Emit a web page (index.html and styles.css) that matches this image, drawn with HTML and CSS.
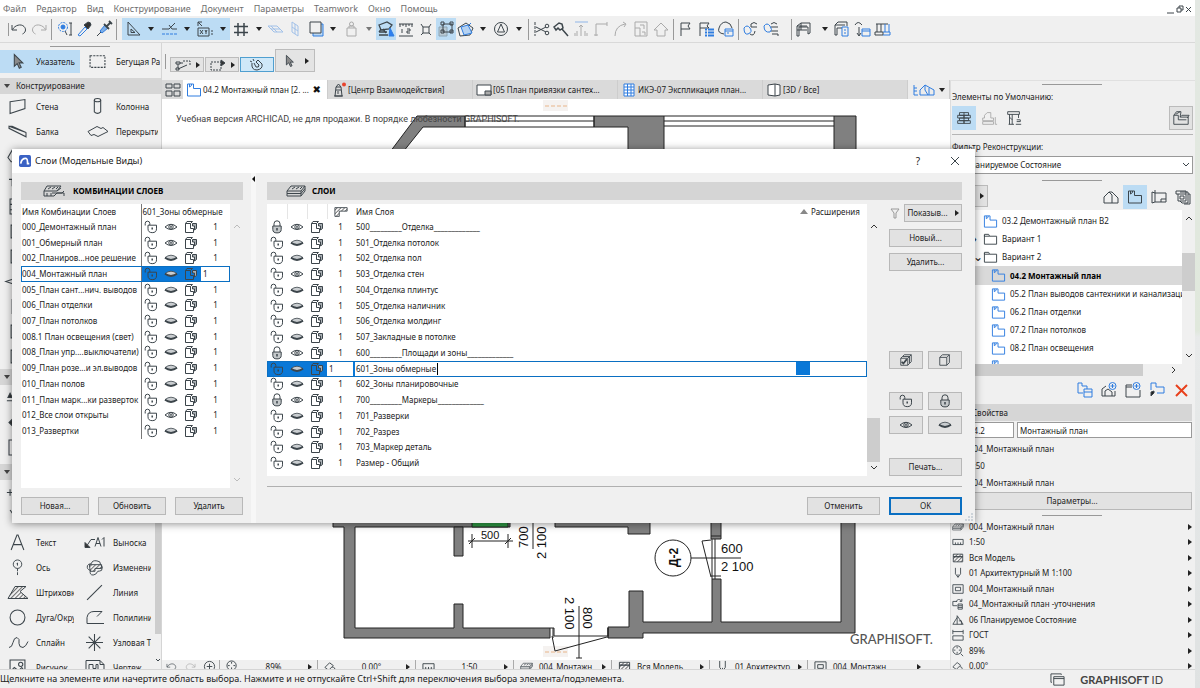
FILE: index.html
```html
<!DOCTYPE html>
<html lang="ru">
<head>
<meta charset="utf-8">
<title>Слои (Модельные Виды)</title>
<link rel="stylesheet" href="styles.css">
</head>
<body>
<svg class="defs" aria-hidden="true">
  <defs>
    <pattern id="hatch" width="3" height="3" patternUnits="userSpaceOnUse" patternTransform="rotate(45)"><path d="M0 0V3" stroke="#333" stroke-width="1.4"/></pattern>
  </defs>
  <symbol id="open" viewBox="0 0 14 14"><path d="M1.2 5.5V3.5a2.3 2.3 0 0 1 4.6 0V5M4 5.2h8.500v3.600a4.200 3.800 0 0 1-8.500 0z"/><path d="M8.200 7.500v2" stroke-width="1.500"/></symbol>
  <symbol id="lock" viewBox="0 0 14 14"><path d="M4 6V3.800a3 3 0 0 1 6 0V6"/><path d="M2.800 6h8.400v3.500a4.200 3.400 0 0 1-8.400 0z" fill="#c4c8ca"/><path d="M7 8v2.400" stroke-width="1.500"/></symbol>
  <symbol id="eye" viewBox="0 0 14 14"><path d="M1 7Q7 1.600 13 7 7 12 1 7z"/><circle cx="7" cy="6.900" r="2.200"/><circle cx="7" cy="6.900" r=".6"/></symbol>
  <symbol id="shut" viewBox="0 0 14 14"><path d="M1 6.600Q7 1.800 13 6.600 7 10.400 1 6.600z" fill="#c9cdd0" stroke-width=".8"/><path d="M1 6.800Q7 11 13 6.800" stroke-width="2"/></symbol>
  <symbol id="model" viewBox="0 0 14 14"><path d="M1.500 3.500V12.500H9.500V8.500H6.500V3.500zM1.500 3.500L3 1.500H8.500L6.500 3.500"/><path d="M8.500 3.500h4v5l-2 1.500V6H8.500z" fill="#a9afb3"/></symbol>
  <symbol id="plan" viewBox="0 0 16 16"><path d="M1.500 2h6v4.500h7V14h-13zM3.500 2v3l2-1.500V2"/></symbol>
  <symbol id="folder" viewBox="0 0 16 16"><path d="M1.500 3.500V13h13V4.500H7L6 2.500H1.500v2H7"/></symbol>
  <symbol id="layers" viewBox="0 0 20 14"><path d="M5 2h14l-4 5H1zM1 7v2.500h14l4-5V2M1 9.500V12h14l4-5V4.500M15 7v5"/><path d="M6 5l3-2M10 5l3-2M14 5l2-2"/></symbol>
  <symbol id="stack" viewBox="0 0 16 16"><path d="M2 6h8v8H2zM2 6l2-2h8v8l-2 2M4 4l2-2h8v8l-2 2M10 6l4-4"/></symbol>
  <symbol id="cursor" viewBox="0 0 16 16"><path d="M5 1.500v11l2.700-2.500 2 4.300 1.800-.8-2-4.200H13z" fill="#8a8a8a"/></symbol>
  <symbol id="undo" viewBox="0 0 20 20"><path d="M3 6v5h5M3.500 10.500C6 6 12 4.500 15 7.500s1 6.500-1.500 7.500"/></symbol>
  <symbol id="redo" viewBox="0 0 20 20"><path d="M17 6v5h-5M16.500 10.500C14 6 8 4.500 5 7.500s-1 6.500 1.500 7.500"/></symbol>
  <symbol id="house" viewBox="0 0 16 16"><path d="M1 14V8l5-5 3 3v8zM6 3h3l6 6v5H9"/></symbol>
  <symbol id="fit" viewBox="0 0 14 14"><circle cx="6" cy="6" r="5"/><path d="M10 10l3 3M6 2v2M6 8v2M2 6h2M8 6h2"/></symbol>
  <symbol id="rule" viewBox="0 0 14 14"><path d="M1 4h12v6H1zM4 10V7.500M7 10V7.500M10 10V7.500"/></symbol>
  <symbol id="wall" viewBox="0 0 14 14"><path d="M1.500 2.500h11v9h-11z" fill="url(#hatch)"/><path d="M1.500 5.500h11" stroke-width="1.500"/></symbol>
  <symbol id="pen" viewBox="0 0 14 14"><path d="M4 1v7l3 4 3-4V1M7 12V8.500"/></symbol>
  <symbol id="frame" viewBox="0 0 14 14"><path d="M1 2h12v10H1zM4 5h6v4H4z"/></symbol>
  <symbol id="over" viewBox="0 0 14 14"><path d="M6 9H1V4h5M7 7h5v6H7zM5 4.500C6 1 9 1 11 3.500M11.500 1v3H9M7 9h5M7 11h5"/></symbol>
  <symbol id="reno" viewBox="0 0 14 14"><path d="M1 12L6 4M1 12h12L6 2v10M8 8h3v4"/></symbol>
  <symbol id="dim" viewBox="0 0 14 14"><path d="M1 1v5M13 1v5M1 3h12M1 8h12v5H1z"/></symbol>
  <symbol id="angle" viewBox="0 0 14 14"><path d="M1 8l5-5 4 3-5 5zM9 8q3-1 3 4M10.500 11l1.500 1.500 1-2"/></symbol>
</svg>

<div class="app">
  <header class="menubar">
    <nav>
      <a href="#">Файл</a><a href="#">Редактор</a><a href="#">Вид</a><a href="#">Конструирование</a><a href="#">Документ</a><a href="#">Параметры</a><a href="#">Teamwork</a><a href="#">Окно</a><a href="#">Помощь</a>
    </nav>
    <svg class="wincontrols" viewBox="0 0 26 12"><path d="M0 10h7M10 5h4v4h-4zM12 5V3h4v4h-2M19 4l5 5M24 4l-5 5"/></svg>
  </header>

  <div class="toolbar">
    <i class="sep"></i>
    <button class="tb" aria-label="Отменить"><svg><use href="#undo"/></svg></button>
    <button class="tb dim" aria-label="Вернуть"><svg><use href="#redo"/></svg></button>
    <i class="sep gap"></i>
    <button class="tb" aria-label="Найти"><svg viewBox="0 0 20 20"><g class="bl"><circle cx="9" cy="8" r="4.500" stroke-dasharray="2 1"/><circle cx="9" cy="8" r="2" fill="#2f7de0"/></g><path d="M11 12l2 4M15 4h3M15 16h3M17 4v12"/></svg></button>
    <button class="tb" aria-label="Пипетка"><svg viewBox="0 0 20 20"><path d="M4 16l7-8 2 2-7 7z" class="bl"/><path d="M10 6l4 4 3-4q0-3-3-3z" fill="#333"/></svg></button>
    <button class="tb" aria-label="Шприц"><svg viewBox="0 0 20 20"><path d="M3 17l4-4"/><path d="M6 12l5-6 3 3-6 5z" class="bl" fill="#7eaee6"/><path d="M10 5l5 5M13 7l4-4M15 2l3 3" stroke-width="1.800"/></svg></button>
    <i class="sep gap"></i>
    <div class="on group">
      <button class="tb w" aria-label="Направляющие"><svg viewBox="0 0 20 20"><path d="M5 3v13h12zM8 10v3.500h4z"/></svg></button><button class="caret" aria-label="Список"></button>
      <button class="tb w" aria-label="Привязка"><svg viewBox="0 0 20 20"><path d="M3 10h7M10 10l6-6M10 6l3 4h5"/><path d="M3 15h15" class="bl" stroke-dasharray="3 1"/></svg></button><button class="caret" aria-label="Список"></button>
      <button class="tb w" aria-label="Координаты"><svg viewBox="0 0 20 20"><path d="M3 3h4M3 3v4M3 3l4 4M3 9h11v8H3zM5 11l3 4M8 11l-3 4M10 11l1 2 1-2M11 13v2M16 12h2M16 15h2"/></svg></button><button class="caret" aria-label="Список"></button>
    </div>
    <button class="tb w" aria-label="Сетка"><svg viewBox="0 0 20 20"><path d="M7 4v13M13 4v13M3 7.500h14M3 13.500h14" stroke-width="1.500"/></svg></button><button class="caret" aria-label="Список"></button>
    <button class="tb fade" aria-label="Плоскость"><svg viewBox="0 0 20 20"><path d="M2 7h9l6 6H8zM5 7l6 6M5 10h9" class="bl"/></svg></button>
    <button class="tb fade" aria-label="Плоскость 2"><svg viewBox="0 0 20 20"><path d="M6 3l6 4v10l-6-4zM9 5v10M6 8l6 4" class="bl"/></svg></button>
    <button class="tb" aria-label="Слои"><svg viewBox="0 0 20 20"><path d="M7 5h10v12H7z" class="bl" fill="#bcd8f2"/><path d="M4 3h11v11H4z" fill="#f0f0f0"/></svg></button><button class="caret" aria-label="Список"></button>
    <button class="tb w dim" aria-label="Гравитация"><svg viewBox="0 0 20 20"><path d="M6 9h9v8H6zM8 9V7h5v2"/><circle cx="10.500" cy="5" r="2"/></svg></button><button class="caret pale" aria-label="Список"></button>
    <button class="tb on" aria-label="Трассировка"><svg viewBox="0 0 20 20"><path d="M3 6l8-3 5 3-3 4-8 1zM5 10l-2 3M3 16h9M7 10l3 4M3 13h8" stroke-width="1.300"/><path d="M14 9l4 8h-5z" class="bl" fill="#2d7ff0"/></svg></button>
    <button class="tb" aria-label="Линейка"><svg viewBox="0 0 20 20"><path d="M3 5h14M4 5v3M7 5v2M10 5v3M13 5v2M16 5v3M3 17h14M6 10v4M11 10h3v2h-3v2h3"/></svg></button>
    <button class="tb" aria-label="Узлы"><svg viewBox="0 0 20 20"><path d="M7 8h6v6H7zM5 5l2 3M15 5l-2 3M5 16l2-2M15 16l-2-2"/></svg></button>
    <button class="tb on" aria-label="Группы"><svg viewBox="0 0 20 20"><path d="M3 8h8v9H3z" stroke="#8da4b4" fill="#b9c9d3"/><path d="M7 5h9v8H7zM5 3h3v3H5zM14 3h3v3h-3zM5 11h3v3H5zM14 11h3v3h-3z"/></svg></button>
    <button class="tb" aria-label="Объём"><svg viewBox="0 0 20 20"><path d="M2 9l8-5 7 5-3 7-10 1z"/><path d="M5 8l7-2 4 8-8 2zM12 7l3-3" class="bl" fill="#b5d2f2"/></svg></button><button class="caret" aria-label="Список"></button>
    <button class="tb w" aria-label="Вид"><svg viewBox="0 0 20 20"><circle cx="10" cy="10" r="6.500"/><path d="M10 5l3.500 8h-7z"/></svg></button><button class="caret" aria-label="Список"></button>
    <i class="sep"></i>
    <button class="tb" aria-label="Разрезать"><svg viewBox="0 0 20 20"><path d="M4 3v14" stroke-dasharray="3 1"/><path d="M5 8l10 5M5 13l10-5"/><circle cx="16" cy="7" r="1.800"/><circle cx="16" cy="14" r="1.800"/></svg></button>
    <button class="tb" aria-label="Подогнать"><svg viewBox="0 0 20 20"><path d="M3 8l5-4 3 1 1 4-3 2-2-2-2 2zM11 10l6 7" stroke-width="1.500"/></svg></button>
    <button class="tb dim" aria-label="Выровнять"><svg viewBox="0 0 20 20"><path d="M4 3h13" class="bl" opacity=".5"/><path d="M10 17V6M8 8l2-2 2 2M6 12v5M14 12v5M4 14v3M16 14v3"/></svg></button>
    <button class="tb dim" aria-label="Угол"><svg viewBox="0 0 20 20"><path d="M5 17V5h11M16 3v4M3 16h4"/></svg></button>
    <button class="tb dim" aria-label="Дуга"><svg viewBox="0 0 20 20"><path d="M4 17q0-10 10-12M12 3l3 2-2 3"/></svg></button>
    <button class="tb dim" aria-label="Размер"><svg viewBox="0 0 20 20"><path d="M4 3h12v14H4zM4 9h5v8M9 6h4v4M11 13h3v3"/></svg></button>
    <button class="tb dim" aria-label="Дом"><svg viewBox="0 0 20 20"><path d="M3 11l7-7 7 7h-3v6H6v-6z"/></svg></button>
    <i class="sep"></i>
    <button class="tb" aria-label="Флаг"><svg viewBox="0 0 20 20"><path d="M5 17V4h9l-2 3 2 3H5"/></svg></button>
    <button class="tb" aria-label="Метки"><svg viewBox="0 0 20 20"><path d="M4 17V4h9l-2 3 2 2H4"/><path d="M9 10.500h9M9 13.500h9M9 16.500h9" class="bl" stroke-width="2" stroke-dasharray="2 1 8"/></svg></button>
    <button class="tb" aria-label="Облако"><svg viewBox="0 0 20 20"><path d="M8 15Q1 14 3 9q2-6 7-6 5 1 6 6"/><path d="M9 10h8v7H9zM9 12h8M11 14h2" class="bl"/></svg></button>
    <i class="sep"></i>
    <button class="tb" aria-label="Связь"><svg viewBox="0 0 20 20"><path d="M10 5q3-3 6 0M10 8h6M10 5v3M9 15q4 3 5-3"/><path d="M3 9q3-4 6 0t-2 6q-4 1-4-6" class="bl"/></svg></button>
    <button class="tb" aria-label="Модуль"><svg viewBox="0 0 20 20"><path d="M10 5q3-3 6 0M10 8h7M10 12h7M11 15h6v2"/><path d="M3 7q3-4 6 0t0 6q-6 1-6-6" class="bl"/></svg></button>
    <i class="sep far"></i>
    <button class="tb" aria-label="Конструкция"><svg viewBox="0 0 20 20"><path d="M3 7l4-3h9v10l-2 1V8H5v9H3zM3 7h10M3 11h10M7 4v7"/></svg></button><button class="caret far2" aria-label="Список"></button>
    <button class="tb" aria-label="Каркас"><svg viewBox="0 0 20 20"><path d="M3 6l3-3h9v4M3 6h10M3 6v10h2V9h5"/><path d="M10 8h6v9h-6zM12 11h2M12 14h2" class="bl"/></svg></button>
    <button class="tb" aria-label="Обмен"><svg viewBox="0 0 20 20"><path d="M3 6q3-5 7 0M7 8v8M5 14l2 3 2-3"/><path d="M10 10h8v7h-8zM10 12h8" class="bl"/></svg></button>
    <button class="tb" aria-label="Колонны"><svg viewBox="0 0 20 20"><path d="M4 5h12M5 5v8M9 5v8M3 13h8v3H3z"/><path d="M13 5v8M17 5v8M11 13h7v3h-7" class="bl"/></svg></button>
  </div>

  <div class="main">
    <aside class="toolbox">
      <div class="handle"></div>
      <div class="arrowrow">
        <button class="tool on"><svg><use href="#cursor"/></svg><span>Указатель</span></button>
        <button class="tool"><svg viewBox="0 0 16 16"><path d="M1 2.500h14v11H1z" stroke-dasharray="2 1"/></svg><span>Бегущая Рамка</span></button>
      </div>
      <h2 class="cat">Конструирование</h2>
      <div class="tools">
        <button class="tool"><svg viewBox="0 0 16 16"><path d="M1 3.500l14-2V10L1 14.500z"/></svg><span>Стена</span></button>
        <button class="tool"><svg viewBox="0 0 16 16"><ellipse cx="8" cy="2" rx="3" ry="1.500"/><path d="M5 2v11q3 3 6 0V2"/></svg><span>Колонна</span></button>
        <button class="tool"><svg viewBox="0 0 16 16"><path d="M0 3l16 6v4L0 5zM0 3l3 0 13 6"/></svg><span>Балка</span></button>
        <button class="tool"><svg class="big" viewBox="0 0 22 16"><path d="M1 8l9-5 4 2 2-1 5 4-10 5-4-2-3 1z"/></svg><span>Перекрытие</span></button>
        <button class="tool"><svg viewBox="0 0 16 16"><path d="M15 2H3L-1 9l3 4h13"/></svg></button><button class="tool"></button>
        <button class="tool"><svg viewBox="0 0 16 16"><path d="M0 6h14M3 6v6h10"/></svg></button><button class="tool"></button>
        <button class="tool"><svg viewBox="0 0 16 16"><path d="M15 1H1v14h13M1 6h13M1 11h13"/></svg></button><button class="tool"></button>
        <button class="tool"><svg viewBox="0 0 16 16"><path d="M15 2H2v12h12"/></svg></button><button class="tool"></button>
        <button class="tool"><svg viewBox="0 0 16 16"><path d="M15 2H2v12h12z"/></svg></button><button class="tool"></button>
        <button class="tool"><svg viewBox="0 0 16 16"><path d="M9 4L-3 8l12 4"/></svg></button><button class="tool"></button>
        <button class="tool"><svg viewBox="0 0 16 16"><path d="M3 1v14"/></svg></button><button class="tool"></button>
        <button class="tool"><svg viewBox="0 0 16 16"><path d="M15 2H2v12h12z"/></svg></button><button class="tool"></button>
        <button class="tool"><svg viewBox="0 0 16 16"><path d="M15 2H2v12h12z"/></svg></button><button class="tool"></button>
      </div>
      <h2 class="cat" aria-label="Каркас"></h2>
      <div class="tools short">
        <button class="tool"><svg viewBox="0 0 16 16"><path d="M-2 11h6M-1 8l2-4 2 4z" fill="#333"/></svg></button><button class="tool"></button>
        <button class="tool"><svg viewBox="0 0 16 16"><path d="M3 5v6L0 8z" fill="#333"/></svg></button><button class="tool"></button>
        <button class="tool"><svg viewBox="0 0 16 16"><path d="M15 1H0v14h14z"/></svg></button><button class="tool"></button>
      </div>
      <h2 class="cat" aria-label="Документ"></h2>
      <div class="lower">
        <div class="tools">
          <button class="tool"><svg viewBox="0 0 16 16"><path d="M-2 8h6M1 5v6"/></svg></button><button class="tool"></button>
          <button class="tool"><svg viewBox="0 0 16 16"><path d="M1 1l5 7"/></svg></button><button class="tool"></button>
          <button class="tool"><svg viewBox="0 0 16 16"><path d="M2 15L7.500 1h1L14 15M4 10h8"/></svg><span>Текст</span></button>
          <button class="tool"><svg class="big" viewBox="0 0 22 16"><path d="M1 8v5h5z" fill="#333"/><path d="M3 11l4-6h4M11 12l3-9 3 9M12 9h4M18 5l2-2v9"/></svg><span>Выноска</span></button>
          <button class="tool"><svg viewBox="0 0 16 18"><circle cx="8" cy="5.500" r="4.500"/><path d="M8 4v3M7 5h1M8 10v8" stroke-dasharray="3 1"/></svg><span>Ось</span></button>
          <button class="tool"><svg class="big" viewBox="0 0 22 18"><path d="M7 5q1-4 6-3 4 0 4 4 3 2 1 6-2 1-4 1-2 4-5 4-4 0-3-5-4-1-3-5 1-2 4-2z"/><path d="M5 6h13v4h-7v3H6z" fill="url(#hatch)"/></svg><span>Изменение</span></button>
          <button class="tool"><svg class="big" viewBox="0 0 22 16"><path d="M1 14L8 2h11l-6 5 8 7z" fill="url(#hatch)"/></svg><span>Штриховка</span></button>
          <button class="tool"><svg viewBox="0 0 16 16"><path d="M1 15L15 1"/></svg><span>Линия</span></button>
          <button class="tool"><svg viewBox="0 0 16 16"><circle cx="8" cy="8" r="7"/></svg><span>Дуга/Окружность</span></button>
          <button class="tool"><svg class="big" viewBox="0 0 22 16"><path d="M20 14H3V8q1-6 7-6h8l-5 5"/></svg><span>Полилиния</span></button>
          <button class="tool"><svg class="big" viewBox="0 0 22 16"><path d="M2 13q3 0 4-5t4-5q3 1 2 6 0 4 4 4 3-1 5-6"/></svg><span>Сплайн</span></button>
          <button class="tool"><svg viewBox="0 0 16 16"><path d="M8 0v16M0 8h16M2.500 2.500l11 11M13.500 2.500l-11 11"/></svg><span>Узловая Точка</span></button>
          <button class="tool"><svg viewBox="0 0 16 16"><path d="M1 1h14v14H1zM1 12l4-4 4 3 3-3 3 4"/><circle cx="11" cy="5" r="2"/></svg><span>Рисунок</span></button>
          <button class="tool"><svg class="big" viewBox="0 0 22 16"><path d="M2 1h14l4 4v11H2zM5 12V5h4v4h3V5h2v7M16 1v4h4"/></svg><span>Чертеж</span></button>
        </div>
        <div class="vscroll"><i></i><svg viewBox="0 0 6 4"><path d="M1 1l2 2 2-2"/></svg></div>
      </div>
    </aside>

    <div class="work">
      <div class="infobar">
        <i class="sep"></i>
        <button class="ib" aria-label="Геометрия"><svg viewBox="0 0 16 14"><path d="M1 4h4v2H1zM1 10h3v2H1zM3 6v4M3 11l9-4M5 5h3"/><path d="M8 3h7v5" stroke-dasharray="2 1"/></svg><b></b></button>
        <button class="ib" aria-label="Рамка"><svg viewBox="0 0 16 14"><path d="M1 4h10v8H1z" stroke-dasharray="2 1"/><path d="M11 2v6l4-3z" fill="#333"/></svg><b></b></button>
        <button class="ib sel" aria-label="Магнит"><svg viewBox="0 0 16 14"><path d="M3 5q-1 7 5 7 6-1 5-6L9 2 7 4l3 3q0 3-3 2L5 5M4 1l1 2M1 3l2 1"/></svg></button>
        <button class="ib tall" aria-label="Указатель"><svg><use href="#cursor"/></svg><b></b></button>
      </div>
      <div class="split">
        <section class="view">
          <div class="tabs">
            <button class="tab grid" aria-label="Вкладки"><svg viewBox="0 0 16 14"><path d="M1 1h6v4H1zM9 1h6v4H9zM1 8h6v5H1zM9 8h6v5H9z"/></svg></button>
            <button class="tab act"><svg class="bl"><use href="#plan"/></svg><span>04.2 Монтажный план [2. ...</span><em>✖</em></button>
            <button class="tab"><svg viewBox="0 0 16 16"><path d="M5 5h5l1 9H4zM3 14h9M5 5l2.500-3L10 5M5 8h5M7 9v3"/><circle cx="13" cy="2.500" r="2" class="red"/></svg><span>[Центр Взаимодействия]</span></button>
            <button class="tab"><svg viewBox="0 0 16 16"><path d="M1 3h14v10H1z" fill="#fff"/><path d="M9 9h6v4H9z" fill="#aaa"/></svg><span>[05 План привязки сантех...</span></button>
            <button class="tab"><svg class="bl" viewBox="0 0 16 16"><path d="M3 2h10v12H3zM3 5h10M3 8h10M3 11h10M6.500 2v12M10 2v12" fill="#fff"/></svg><span>ИКЭ-07 Экспликация план...</span></button>
            <button class="tab"><svg viewBox="0 0 16 16"><path d="M2 3l7-1v12l-7-1zM9 2l5 1v10l-5 1" fill="#fff"/></svg><span>[3D / Все]</span></button>
            <button class="tab home" aria-label="Навигатор"><svg class="bl big" viewBox="0 0 22 14"><path d="M1 2v10h4M1 5h3M1 8h3M7 12V7l5-5 9 5v5zM12 2v5l3 5M16 5v7"/></svg><i class="dn"></i></button>
          </div>
          <div class="canvas">
            <svg class="drawing" viewBox="162 99 788 561" preserveAspectRatio="xMinYMin meet">
              <rect x="543" y="100" width="25" height="11" fill="#f5f2f0" stroke="none"/><path d="M545 106h22" stroke="#e8b58a" stroke-dasharray="4 2"/>
              <g class="w">
                <path d="M417 116h48v11h-42l-20 25h-13z"/>
                <path d="M594 116h70v36h-36v-25h-34zM834 116h22v36h-22z"/>
                <path d="M333 515h177v12H355v101h99v-24h9v24h87v10H344V527h-11zM555 515h95v19h-22v-7h-73z"/>
                <path d="M454 527h9v29h-9zM711 515h10v24h-10zM608 627h21v-36h14v31h69v-43h9v43h120V515h14v118H643v5h-35z"/>
              </g>
              <path d="M465 116h129v11H465zM465 121h129M664 116h170M664 121h170M664 126h170M712 539v40M715 539v40" class="ln"/>
              <text x="176" y="122" class="note">Учебная версия ARCHICAD, не для продажи. В порядке любезности GRAPHISOFT.</text>
              <path d="M472 515h36v12h-36z" fill="#2f9a45" stroke="#222"/>
              <rect x="543" y="646" width="25" height="11" fill="#f5f2f0" stroke="none"/>
              <path d="M545 652h22" stroke="#e8b58a" stroke-dasharray="4 2"/>
              <path d="M553 628v10M608 628v10M550 628h4v8h54v-8M552 636l3 15 52-14M579 606v52M576 658h6M533 515v34M468 541h45M472 534v14M508 534v14M469 544l6-6M505 544l6-6M711 540l-9 1 9 36M691 558h50M711 536h10M711 576h10" class="ln"/>
              <circle cx="673" cy="558" r="18" class="ln"/>
              <g class="mark">
                <text x="481" y="539" class="s">500</text>
                <text transform="translate(528 548) rotate(-90)">700</text><text transform="translate(546 559) rotate(-90)">2 100</text>
                <text transform="translate(565 597) rotate(90)">2 100</text><text transform="translate(583 607) rotate(90)">800</text>
                <text x="721" y="553">600</text><text x="721" y="571">2 100</text>
                <text transform="translate(678 567) rotate(-90)" class="m">Д-2</text>
              </g>
              <text x="850" y="644" class="brand">GRAPHISOFT.</text>
            </svg>
          </div>
          <div class="quick">
            <div class="q nav"><svg><use href="#undo"/></svg><svg class="dimc"><use href="#redo"/></svg><svg viewBox="0 0 14 14"><circle cx="7" cy="7" r="5.500"/><path d="M7 4v6M4 7h6"/></svg></div>
            <div class="q"><svg><use href="#fit"/></svg><span class="mid">89%</span><b></b></div>
            <div class="q"><svg><use href="#angle"/></svg><span class="mid">0.00°</span><b></b></div>
            <div class="q"><svg><use href="#rule"/></svg><span class="mid">1:50</span><b></b></div>
            <div class="q"><svg><use href="#layers"/></svg><span>004_Монтажн</span><b></b></div>
            <div class="q"><svg><use href="#wall"/></svg><span>Вся Модель</span><b></b></div>
            <div class="q"><svg><use href="#pen"/></svg><span>01 Архитектур</span><b></b></div>
            <div class="q"><svg><use href="#frame"/></svg><span>004_Монтажн</span><b></b></div>
          </div>
        </section>

        <aside class="side">
          <div class="handle"></div>
          <p class="lbl">Элементы по Умолчанию:</p>
          <div class="defaults">
            <button class="sq on" aria-label="Существующие"><svg viewBox="0 0 20 20"><path d="M5 4h10v3H5zM3 7h7v3H3zM10 7h7v3h-7zM5 10h10v3H5zM3 13h7v3H3zM10 13h7v3h-7zM10 4v3M10 10v3"/></svg></button>
            <button class="sq dim" aria-label="Демонтируемые"><svg viewBox="0 0 20 20"><path d="M5 10V7l3-3h4v6h3v3H3v-3zM3 14h12v3H3zM17 9v8h2"/></svg></button>
            <button class="sq" aria-label="Новые"><svg viewBox="0 0 20 20"><path d="M3 3h13v3H3zM5 6v11M8 6v11M4 17h6M15 6v4M13 12h4v2h-4M12 17h6M5 9l3 3"/></svg></button>
            <button class="sq box" aria-label="Реконструкция"><svg viewBox="0 0 20 20"><path d="M2 7l3-4h5l-1 6h9v8H2zM2 7h5v5h9M9 9l2-2h8l-2 3M4 6l5-3"/></svg></button>
          </div>
          <label class="lbl" for="filter">Фильтр Реконструкции:</label>
          <div class="combo"><select id="filter"><option>Планируемое Состояние</option></select><svg viewBox="0 0 8 6"><path d="M1 1l3 3 3-3"/></svg></div>
          <div class="handle h2"></div>
          <div class="navtabs">
            <button class="navbtn" aria-label="Проект"><b></b></button>
            <button class="sq" aria-label="Карта проекта"><svg><use href="#house"/></svg></button>
            <button class="sq on" aria-label="Карта видов"><svg><use href="#plan"/></svg></button>
            <button class="sq" aria-label="Книга макетов"><svg viewBox="0 0 16 16"><path d="M4 1v12H15V4H4L1 3v11l3-1M10 13v-3h5"/></svg></button>
            <button class="sq" aria-label="Публикация"><svg viewBox="0 0 16 16"><path d="M1 2h10v3H1zM3 5v7h8V5M5 3h8v11H7l-2-2M13 5h2v10H9M5 7h4v3H5z"/></svg></button>
          </div>
          <div class="treebox">
            <ul class="tree">
              <li><svg class="bl"><use href="#plan"/></svg>03.2 Демонтажный план В2</li>
              <li class="f"><em>›</em><svg><use href="#folder"/></svg>Вариант 1</li>
              <li class="f"><em>⌄</em><svg><use href="#folder"/></svg>Вариант 2</li>
              <li class="c cur"><svg class="bl"><use href="#plan"/></svg>04.2 Монтажный план</li>
              <li class="c"><svg class="bl"><use href="#plan"/></svg>05.2 План выводов сантехники и канализации</li>
              <li class="c"><svg class="bl"><use href="#plan"/></svg>06.2 План отделки</li>
              <li class="c"><svg class="bl"><use href="#plan"/></svg>07.2 План потолков</li>
              <li class="c"><svg class="bl"><use href="#plan"/></svg>08.2 План освещения</li>
              <li class="c"><svg class="bl"><use href="#plan"/></svg></li>
            </ul>
            <div class="sb tsb"><svg viewBox="0 0 8 6"><path d="M1 5l3-3 3 3"/></svg><i></i><svg viewBox="0 0 8 6"><path d="M1 1l3 3 3-3"/></svg></div>
          </div>
          <div class="hscroll"><i></i><svg viewBox="0 0 6 8"><path d="M1 1l3 3-3 3"/></svg></div>
          <div class="acts">
            <button class="ac" aria-label="Копировать"><svg class="bl" viewBox="0 0 16 16"><path d="M1 1h4v3h5v3M1 1v10h5M7 7h8v8H7zM7 10h8"/></svg></button>
            <button class="ac" aria-label="Новый вид"><svg viewBox="0 0 16 16"><path d="M1 14V7l4-3M1 14h13V9M4 14V9l3-2 4 3v4"/><circle cx="11.500" cy="4" r="3.500" class="bl" fill="#f0f0f0"/><path d="M11.500 2v4M9.500 4h4" class="bl"/></svg></button>
            <button class="ac" aria-label="Новая папка"><svg viewBox="0 0 16 16"><path d="M7 3H1v12h14V8M1 5h6"/><circle cx="11.500" cy="4" r="3.500" class="bl" fill="#f0f0f0"/><path d="M11.500 2v4M9.500 4h4" class="bl"/></svg></button>
            <button class="ac" aria-label="Обновить вид"><svg viewBox="0 0 16 16"><path d="M2 8V1h5v4h8v6H8" class="bl"/><path d="M2 14v-4l3-1v2z" fill="#222"/></svg></button>
            <button class="ac" aria-label="Удалить"><svg viewBox="0 0 16 16"><path d="M3 3l11 11M14 3L3 14" class="x"/></svg></button>
          </div>
          <h2 class="prop">Свойства</h2>
          <div class="ids"><input class="id" aria-label="Номер" value="04.2"><input class="nm" aria-label="Имя" value="Монтажный план"></div>
          <ul class="props"><li>004_Монтажный план</li><li>1:50</li><li>004_Монтажный план</li></ul>
          <button class="btn wide">Параметры...</button>
          <div class="handle h3"></div>
          <ul class="opts">
            <li><svg><use href="#layers"/></svg>004_Монтажный план<b></b></li>
            <li><svg><use href="#rule"/></svg>1:50<b></b></li>
            <li><svg><use href="#wall"/></svg>Вся Модель<b></b></li>
            <li><svg><use href="#pen"/></svg>01 Архитектурный М 1:100<b></b></li>
            <li><svg><use href="#frame"/></svg>004_Монтажный план<b></b></li>
            <li><svg><use href="#over"/></svg>04_Монтажный план -уточнения<b></b></li>
            <li><svg><use href="#reno"/></svg>06 Планируемое Состояние<b></b></li>
            <li><svg><use href="#dim"/></svg>ГОСТ<b></b></li>
            <li><svg><use href="#fit"/></svg>89%<b></b></li>
            <li><svg><use href="#angle"/></svg>0.00°<b></b></li>
          </ul>
        </aside>
      </div>
    </div>
  </div>

  <footer class="status">
    <span>Щелкните на элементе или начертите область выбора. Нажмите и не отпускайте Ctrl+Shift для переключения выбора элемента/подэлемента.</span>
    <svg viewBox="0 0 16 16"><path d="M4 5h11v9H4zM4 7h11M2 11H1V2h11v1"/></svg>
    <strong>GRAPHISOFT <small>ID</small></strong>
  </footer>
</div>

<div class="dialog" role="dialog" aria-labelledby="dt">
  <div class="title">
    <svg viewBox="0 0 14 14"><rect width="14" height="14" rx="2" fill="#3b62c4"/><path d="M2 10Q3 4 8 4q2 0 2 6h2" stroke="#fff" stroke-width="2"/></svg>
    <h1 id="dt">Слои (Модельные Виды)</h1>
    <button aria-label="Справка">?</button>
    <button aria-label="Закрыть"><svg viewBox="0 0 10 10"><path d="M1 1l8 8M9 1L1 9"/></svg></button>
  </div>
  <div class="dbody">
    <section class="combos">
      <h2 class="sec"><svg viewBox="0 0 22 14"><path d="M4 2h14l-4 5H1zM1 7v5h10l3-3h7v3M14 7l4-3M9 9h10l2-2"/><path d="M5 5l3-2M9 5l3-2M13 5l2-2M4 9v3M8 9v3"/></svg>КОМБИНАЦИИ СЛОЕВ</h2>
      <div class="list">
        <div class="sheet">
          <table class="tl">
            <colgroup><col class="c0"><col class="c1"><col class="c1"><col class="c1"><col></colgroup>
            <thead><tr><th class="n">Имя Комбинации Слоев</th><th colspan="4">601_Зоны обмерные</th></tr></thead>
            <tbody>
              <tr><td class="n">000_Демонтажный план</td><td><svg><use href="#open"/></svg></td><td><svg><use href="#eye"/></svg></td><td><svg><use href="#model"/></svg></td><td>1</td></tr>
              <tr><td class="n">001_Обмерный план</td><td><svg><use href="#open"/></svg></td><td><svg><use href="#eye"/></svg></td><td><svg><use href="#model"/></svg></td><td>1</td></tr>
              <tr><td class="n">002_Планиров...ное решение</td><td><svg><use href="#open"/></svg></td><td><svg><use href="#shut"/></svg></td><td><svg><use href="#model"/></svg></td><td>1</td></tr>
              <tr class="cur"><td class="n">004_Монтажный план</td><td class="b"><svg><use href="#open"/></svg></td><td class="b"><svg><use href="#shut"/></svg></td><td class="b"><svg><use href="#model"/></svg></td><td class="e">1</td></tr>
              <tr><td class="n">005_План сант...нич. выводов</td><td><svg><use href="#open"/></svg></td><td><svg><use href="#shut"/></svg></td><td><svg><use href="#model"/></svg></td><td>1</td></tr>
              <tr><td class="n">006_План отделки</td><td><svg><use href="#open"/></svg></td><td><svg><use href="#shut"/></svg></td><td><svg><use href="#model"/></svg></td><td>1</td></tr>
              <tr><td class="n">007_План потолков</td><td><svg><use href="#open"/></svg></td><td><svg><use href="#shut"/></svg></td><td><svg><use href="#model"/></svg></td><td>1</td></tr>
              <tr><td class="n">008.1 План освещения (свет)</td><td><svg><use href="#open"/></svg></td><td><svg><use href="#shut"/></svg></td><td><svg><use href="#model"/></svg></td><td>1</td></tr>
              <tr><td class="n">008_План упр....выключатели)</td><td><svg><use href="#open"/></svg></td><td><svg><use href="#shut"/></svg></td><td><svg><use href="#model"/></svg></td><td>1</td></tr>
              <tr><td class="n">009_План розе...и эл.выводов</td><td><svg><use href="#open"/></svg></td><td><svg><use href="#shut"/></svg></td><td><svg><use href="#model"/></svg></td><td>1</td></tr>
              <tr><td class="n">010_План полов</td><td><svg><use href="#open"/></svg></td><td><svg><use href="#shut"/></svg></td><td><svg><use href="#model"/></svg></td><td>1</td></tr>
              <tr><td class="n">011_План марк...ки разверток</td><td><svg><use href="#open"/></svg></td><td><svg><use href="#shut"/></svg></td><td><svg><use href="#model"/></svg></td><td>1</td></tr>
              <tr><td class="n">012_Все слои открыты</td><td><svg><use href="#open"/></svg></td><td><svg><use href="#eye"/></svg></td><td><svg><use href="#model"/></svg></td><td>1</td></tr>
              <tr><td class="n">013_Развертки</td><td><svg><use href="#open"/></svg></td><td><svg><use href="#shut"/></svg></td><td><svg><use href="#model"/></svg></td><td>1</td></tr>
            </tbody>
          </table>
        </div>
        <div class="sb off"><svg viewBox="0 0 8 6"><path d="M1 5l3-3 3 3"/></svg><svg viewBox="0 0 8 6"><path d="M1 1l3 3 3-3"/></svg></div>
      </div>
      <div class="row3"><button class="btn">Новая...</button><button class="btn">Обновить</button><button class="btn">Удалить</button></div>
    </section>
    <div class="splitter"><svg viewBox="0 0 5 6"><path d="M4 0v6L1 3z" fill="#111"/></svg></div>
    <section class="lays">
      <h2 class="sec"><svg viewBox="0 0 20 14"><use href="#layers"/></svg>СЛОИ</h2>
      <div class="cols">
        <div class="sheet">
          <table class="tr">
            <thead><tr><th></th><th></th><th></th><th><svg viewBox="0 0 16 12"><path d="M1 1h14v4H6v6H1z" fill="url(#hatch)"/></svg></th><th class="n">Имя Слоя</th><th class="x"><i></i>Расширения</th></tr></thead>
            <tbody>
              <tr><td><svg><use href="#lock"/></svg></td><td><svg><use href="#eye"/></svg></td><td><svg><use href="#model"/></svg></td><td>1</td><td class="n">500_________Отделка_____________</td><td></td></tr>
              <tr><td><svg><use href="#open"/></svg></td><td><svg><use href="#shut"/></svg></td><td><svg><use href="#model"/></svg></td><td>1</td><td class="n">501_Отделка потолок</td><td></td></tr>
              <tr><td><svg><use href="#open"/></svg></td><td><svg><use href="#shut"/></svg></td><td><svg><use href="#model"/></svg></td><td>1</td><td class="n">502_Отделка пол</td><td></td></tr>
              <tr><td><svg><use href="#open"/></svg></td><td><svg><use href="#eye"/></svg></td><td><svg><use href="#model"/></svg></td><td>1</td><td class="n">503_Отделка стен</td><td></td></tr>
              <tr><td><svg><use href="#open"/></svg></td><td><svg><use href="#shut"/></svg></td><td><svg><use href="#model"/></svg></td><td>1</td><td class="n">504_Отделка плинтус</td><td></td></tr>
              <tr><td><svg><use href="#open"/></svg></td><td><svg><use href="#shut"/></svg></td><td><svg><use href="#model"/></svg></td><td>1</td><td class="n">505_Отделка наличник</td><td></td></tr>
              <tr><td><svg><use href="#open"/></svg></td><td><svg><use href="#shut"/></svg></td><td><svg><use href="#model"/></svg></td><td>1</td><td class="n">506_Отделка молдинг</td><td></td></tr>
              <tr><td><svg><use href="#open"/></svg></td><td><svg><use href="#shut"/></svg></td><td><svg><use href="#model"/></svg></td><td>1</td><td class="n">507_Закладные в потолке</td><td></td></tr>
              <tr><td><svg><use href="#lock"/></svg></td><td><svg><use href="#eye"/></svg></td><td><svg><use href="#model"/></svg></td><td>1</td><td class="n">600_________Площади и зоны_____________</td><td></td></tr>
              <tr class="cur"><td class="b"><svg><use href="#open"/></svg></td><td class="b"><svg><use href="#shut"/></svg></td><td class="b"><svg><use href="#model"/></svg></td><td class="e">1</td><td class="n"><input aria-label="Имя слоя" value="601_Зоны обмерные"></td><td class="ext"><i></i></td></tr>
              <tr><td><svg><use href="#open"/></svg></td><td><svg><use href="#shut"/></svg></td><td><svg><use href="#model"/></svg></td><td>1</td><td class="n">602_Зоны планировочные</td><td></td></tr>
              <tr><td><svg><use href="#lock"/></svg></td><td><svg><use href="#eye"/></svg></td><td><svg><use href="#model"/></svg></td><td>1</td><td class="n">700_________Маркеры_____________</td><td></td></tr>
              <tr><td><svg><use href="#open"/></svg></td><td><svg><use href="#shut"/></svg></td><td><svg><use href="#model"/></svg></td><td>1</td><td class="n">701_Разверки</td><td></td></tr>
              <tr><td><svg><use href="#open"/></svg></td><td><svg><use href="#shut"/></svg></td><td><svg><use href="#model"/></svg></td><td>1</td><td class="n">702_Разрез</td><td></td></tr>
              <tr><td><svg><use href="#open"/></svg></td><td><svg><use href="#shut"/></svg></td><td><svg><use href="#model"/></svg></td><td>1</td><td class="n">703_Маркер деталь</td><td></td></tr>
              <tr><td><svg><use href="#open"/></svg></td><td><svg><use href="#shut"/></svg></td><td><svg><use href="#model"/></svg></td><td>1</td><td class="n">Размер - Общий</td><td></td></tr>
            </tbody>
          </table>
        </div>
        <div class="sb lsb"><svg viewBox="0 0 8 6"><path d="M1 5l3-3 3 3"/></svg><i></i><svg viewBox="0 0 8 6"><path d="M1 1l3 3 3-3"/></svg></div>
        <div class="cmds">
          <div class="show"><svg viewBox="0 0 12 12"><path d="M2 2h8L7 6v5H5V6z"/></svg><button class="btn">Показыв...<b></b></button></div>
          <button class="btn m7">Новый...</button>
          <button class="btn m6">Удалить...</button>
          <div class="pair m80"><button class="btn" aria-label="Выбрать все"><svg viewBox="0 0 16 16"><use href="#stack"/><path d="M3 10l2 2 4-5" stroke-width="2"/></svg></button><button class="btn" aria-label="Снять выбор"><svg viewBox="0 0 16 16"><path d="M2 5h8v9H2zM2 5l3-3h8v9l-3 3M10 5l3-3"/></svg></button></div>
          <div class="pair m23"><button class="btn" aria-label="Разблокировать"><svg><use href="#open"/></svg></button><button class="btn" aria-label="Заблокировать"><svg><use href="#lock"/></svg></button></div>
          <div class="pair m6"><button class="btn" aria-label="Показать"><svg><use href="#eye"/></svg></button><button class="btn" aria-label="Скрыть"><svg><use href="#shut"/></svg></button></div>
          <button class="btn m24">Печать...</button>
        </div>
      </div>
      <div class="foot"><button class="btn">Отменить</button><button class="btn ok">OK</button></div>
    </section>
  </div>
  <svg class="grip" viewBox="0 0 8 8"><path d="M6 1h2M3 4h2M6 4h2M0 7h2M3 7h2M6 7h2"/></svg>
</div>
</body>
</html>
```
FILE: styles.css
```css
* { box-sizing: border-box; }
body {
  margin: 0;
  background: linear-gradient(#e3e8e3 0, #e0e8dc 48%, #e8eaea 49%, #dfe2e2 100%);
  color: #222;
  font: 8px/12px "Noto Sans", "Open Sans", sans-serif;
  overflow: hidden;
}
button, input, select { font: inherit; color: inherit; margin: 0; padding: 0; border: 0; background: none; border-radius: 0; }
h1, h2, p, ul { margin: 0; padding: 0; font-size: inherit; font-weight: normal; list-style: none; }
a { color: inherit; text-decoration: none; }
i, em { font-style: normal; }
svg { fill: none; stroke: #3c454b; stroke-width: 1; flex: none; display: block; }
.bl { stroke: #2f7de0; }
.red { fill: #e8432c; stroke: none; }
.defs { position: absolute; width: 0; height: 0; }
b { flex: none; width: 0; height: 0; border: solid transparent; border-width: 3px 0 3px 4px; border-left-color: #222; }

.app { display: flex; flex-direction: column; height: 100vh; margin-right: 5px; background: #f0f0f0; }
.menubar { display: flex; flex: none; justify-content: space-between; align-items: center; height: 16px; padding: 2px 2px 0 3px; background: #fff; color: #6e6e6e; font-size: 9px; }
.menubar nav { display: flex; gap: 10px; }
.wincontrols { width: 26px; height: 12px; }

.toolbar { display: flex; flex: none; align-items: center; height: 27px; padding-left: 8px; border-bottom: 1px solid #d9d9d9; overflow: hidden; }
.sep { flex: none; width: 1px; height: 15px; background: #999; }
.toolbar .sep { height: 21px; margin: 0 2px; }
.toolbar .sep:first-child { height: 13px; margin: 0; }
.toolbar .sep.far { margin-left: 10px; }
.group { display: flex; margin-left: 3px; }
.tb { display: grid; place-items: center; flex: none; width: 20px; height: 22px; }
.tb.w { width: 22px; }
.tb svg { width: 20px; height: 20px; }
.on { background: #bcdcf4; }
.dim svg, svg.dimc { stroke: #aaa; }
.fade svg { opacity: .4; }
.caret { flex: none; width: 14px; height: 22px; display: grid; place-items: center; }
.caret::before, .dn { content: ""; border: solid transparent; border-width: 4px 3px 0; border-top-color: #222; width: 0; height: 0; }
.caret.pale::before { border-top-color: #777; }
.far2 { margin-left: 4px; }

.main { display: flex; flex: 1; min-height: 0; }
.toolbox { flex: none; width: 162px; display: flex; flex-direction: column; overflow: hidden; border-right: 1px solid #d5d5d5; }
.handle { flex: none; width: 60px; height: 1px; margin: 3px auto 3px 50px; background: #999; }
.arrowrow { display: flex; flex: none; }
.tool { display: flex; align-items: center; width: 80px; height: 25px; padding-left: 9px; gap: 10px; overflow: hidden; white-space: nowrap; text-align: left; }
.tool svg { width: 17px; height: 17px; overflow: visible; }
.tool svg.big { width: 22px; margin: 0 -3px 0 -2px; }
.arrowrow .tool { height: 23px; }
.cat { flex: none; height: 16px; margin-top: 5px; padding-left: 16px; background: #d6d6d6; line-height: 16px; position: relative; }
.cat::before { content: ""; position: absolute; left: 4px; top: 6px; border: solid transparent; border-width: 4px 3px 0; border-top-color: #444; }
.tools { display: grid; grid-template-columns: 80px 78px; flex: none; }
.tools .tool { width: auto; }
.tools + .cat { margin-top: 0; }
.tools.short + .cat { margin-top: 4px; }
.lower { display: flex; flex: 1; min-height: 0; overflow: hidden; }
.lower .tools { grid-template-columns: 74px 77px; width: 155px; align-content: start; }
.lower .tool:nth-child(even) { padding-left: 12px; }
.vscroll { display: flex; flex-direction: column; align-items: center; width: 6px; }
.vscroll i { width: 6px; height: 154px; background: #cdcdcd; margin-bottom: 24px; }
.vscroll svg { width: 6px; height: 4px; }

.work { flex: 1; min-width: 0; display: flex; flex-direction: column; }
.infobar { display: flex; flex: none; align-items: flex-end; gap: 1px; height: 37px; padding: 0 3px 8px; }
.infobar .sep { margin-right: 3px; margin-bottom: 3px; }
.ib { display: flex; align-items: center; justify-content: center; gap: 5px; width: 34px; height: 15px; background: #e4e4e4; border: 1px solid #bcbcbc; }
.ib svg { width: 16px; height: 14px; }
.ib.sel { background: #cfe8f8; border-color: #4f9fd0; }
.ib.tall { width: 40px; height: 23px; gap: 8px; }
.split { display: flex; flex: 1; min-height: 0; }
.view { display: flex; flex-direction: column; flex: 1; min-width: 0; }
.tabs { display: flex; flex: none; height: 19px; background: #dadada; }
.tab { display: flex; align-items: center; flex: 1 1 146px; min-width: 0; gap: 1px; padding-left: 3px; white-space: nowrap; overflow: hidden; border-right: 1px solid #cdcdcd; }
.tab svg { width: 16px; height: 16px; }
.tab em { margin-left: auto; padding-right: 6px; font: 10px "DejaVu Sans", sans-serif; color: #111; }
.tab.grid { flex: none; width: 21px; border: 0; }
.tab.act { background: #fff; }
.tab.home { flex: none; width: 42px; gap: 4px; background: #ececec; }
.tab svg.big { width: 22px; height: 14px; margin-left: 2px; }
.canvas { flex: 1; min-height: 0; background: #fff; overflow: hidden; }
.drawing { width: 100%; height: 100%; }
.drawing .w path { fill: #808080; stroke: #222; }
.ln { stroke: #222; stroke-width: 1; fill: none; }
.drawing text { fill: #444; stroke: none; }
.drawing text.note { font: 9px Roboto, sans-serif; }
.drawing .mark text { font: 13px "Liberation Sans", sans-serif; fill: #111; }
.drawing .mark .s { font-size: 11px; }
.drawing .mark .m { font-size: 12px; font-weight: bold; }
.drawing text.brand { font: 500 13px Lato, sans-serif; fill: #555; }
.quick { display: flex; flex: none; height: 9px; overflow: hidden; }
.q { display: flex; align-items: center; flex: none; width: 98px; height: 13px; padding: 0 5px 0 6px; gap: 6px; border-right: 1px solid #aaa; white-space: nowrap; overflow: hidden; }
.q svg { width: 13px; height: 13px; }
.q.nav { width: 58px; padding: 0 3px; }
.q span { flex: 1; }
.q .mid { text-align: center; }
.q:last-child { border: 0; width: 118px; }

.side { flex: none; width: 245px; padding-left: 1px; display: flex; flex-direction: column; overflow: hidden; border-left: 1px solid #ddd; border-top: 1px solid #e0e0e0; }
.side .handle { margin: 3px auto 6px 90px; }
.lbl { display: block; height: 12px; }
.defaults { display: flex; gap: 1px; margin: 3px 2px 6px 0; padding-bottom: 4px; border-bottom: 1px solid #b5b5b5; }
.sq { display: grid; place-items: center; width: 24px; height: 24px; }
.sq svg { width: 18px; height: 18px; }
.sq.box { margin-left: auto; background: #e2e2e2; border: 1px solid #bbb; }
.combo { position: relative; flex: none; margin: 3px 2px 0 0; }
.combo select { display: block; width: 100%; height: 18px; padding-left: 12px; border: 1px solid #999; background: #fff; appearance: none; }
.combo svg { position: absolute; right: 3px; top: 6px; width: 8px; height: 6px; }
.side .h2 { margin: 6px auto 4px 90px; }
.navtabs { display: flex; flex: none; }
.navtabs svg { width: 16px; height: 16px; }
.navbtn { display: grid; place-items: center; width: 36px; padding-left: 24px; height: 22px; margin-right: auto; background: #e2e2e2; border: 1px solid #bbb; }
.treebox { display: flex; flex: none; height: 154px; margin-top: 1px; }
.tree { flex: 1; min-width: 0; padding-top: 2px; overflow: hidden; background: #fff; }
.tree li { display: flex; align-items: center; height: 18px; gap: 4px; padding-left: 31px; white-space: nowrap; }
.tree svg { width: 15px; height: 15px; }
.tree .f { padding-left: 21px; }
.tree em { width: 6px; font-size: 12px; }
.tree .c { padding-left: 39px; }
.tree .cur { background: #d9d9d9; font-weight: bold; color: #000; height: 19px; }
.sb { display: flex; flex-direction: column; align-items: center; flex: none; width: 13px; padding: 5px 0; }
.sb svg { width: 8px; height: 6px; stroke: #333; }
.sb i { width: 13px; background: #cdcdcd; }
.tsb i { height: 38px; margin: 32px 0 auto; }
.hscroll { display: flex; flex: none; align-items: center; height: 12px; }
.hscroll i { width: 191px; height: 12px; background: #cdcdcd; }
.hscroll svg { width: 6px; height: 8px; margin-left: 28px; stroke: #333; }
.acts { display: flex; flex: none; justify-content: flex-end; gap: 8px; padding: 6px 6px 6px 0; }
.acts svg { width: 16px; height: 16px; }
.x { stroke: #e8401c; stroke-width: 2; }
.prop { flex: none; height: 17px; margin-right: 3px; padding-left: 20px; line-height: 17px; background: #d6d6d6; }
.ids { display: flex; flex: none; gap: 3px; margin: 1px 3px 2px 0; }
.ids input { height: 16px; background: #fff; border: 1px solid #999; padding-left: 2px; }
.ids .id { width: 62px; padding-left: 16px; }
.ids .nm { flex: 1; min-width: 0; }
.props li { height: 17px; line-height: 17px; padding-left: 17px; }
.btn { display: flex; align-items: center; justify-content: center; height: 18px; border: 1px solid #b8b8b8; background: #e2e2e2; white-space: nowrap; }
.btn.wide { flex: none; margin: 1px 3px 0 0; }
.side .h3 { margin: 5px auto 3px 90px; }
.opts { display: grid; height: 155px; flex: none; grid-auto-rows: 1fr; }
.opts li { display: flex; align-items: center; min-height: 0; gap: 5px; padding: 0 3px 0 0; }
.opts b { margin-left: auto; }
.opts svg { width: 12px; height: 12px; }

.status { display: flex; flex: none; align-items: center; height: 19px; border-top: 1px solid #d5d5d5; background: #f0f0f0; font-size: 9px; white-space: nowrap; }
.status svg { width: 15px; height: 15px; margin: 0 15px 0 auto; }
.status strong { font: bold 11px Lato, sans-serif; color: #444; padding-right: 32px; }
.status small { font-size: inherit; font-weight: normal; }

/* layer settings window floating over the workspace */
.dialog { position: absolute; left: 12px; right: 225px; top: 149px; background: #f0f0f0; box-shadow: 0 1px 8px rgba(0, 0, 0, .45); }
.title { display: flex; align-items: center; height: 24px; padding: 0 14px 0 7px; background: #fff; }
.title > svg { width: 12px; height: 12px; margin-right: 4px; stroke: none; }
.title h1 { flex: 1; font-size: 9px; }
.title button { width: 12px; margin-left: 25px; font-size: 10px; display: grid; place-items: center; }
.title button svg { width: 10px; height: 10px; }
.dbody { display: flex; padding: 9px 0 8px; }
.combos { flex: none; width: 239px; padding: 0 8px 0 9px; display: flex; flex-direction: column; gap: 4px; }
.sec { display: flex; align-items: center; height: 18px; padding-left: 22px; gap: 8px; background: #d5d5d5; font-weight: bold; color: #000; }
.sec svg { width: 22px; height: 14px; }
.list { display: flex; height: 284px; }
.sheet { flex: 1; min-width: 0; background: #fff; }
.sb.off { justify-content: space-between; padding: 19px 0 5px; }
.sb.off svg { stroke: #bbb; }
table { border-collapse: collapse; table-layout: fixed; width: 100%; }
th, td { padding: 0; font-weight: normal; text-align: center; white-space: nowrap; line-height: 12px; }
thead tr { height: 15px; }
td svg, th svg { width: 14px; height: 14px; margin: auto; }
.tl { height: 235px; }
.c0 { width: 120px; }
.c1 { width: 20px; }
.tl th, .n { text-align: left; padding-left: 1px; overflow: hidden; }
.tl .n { border-right: 1px solid #777; }
.tl th + th { padding-left: 1px; }
.tr { height: 267px; }
.tr th:nth-child(-n+3) { width: 20px; border-right: 1px solid #e5e5e5; }
.tr th:nth-child(4) { width: 27px; }
.tr .n { padding-left: 2px; }
.tr .x { width: 71px; text-align: left; }
.x i { display: inline-block; margin: 0 3px 1px 4px; border: solid transparent; border-width: 0 4px 5px; border-bottom-color: #888; }
.b { background: #0a78d7; }
.cur .e { text-align: left; padding-left: 2px; }
tr.cur { outline: 1px solid #0a6fc2; outline-offset: -1px; }
.tr .cur .n { border-left: 2px solid #0a78d7; padding-left: 1px; }
.tr .cur input { display: block; width: 82px; height: 12px; border-right: 1px solid #000; }
.ext i { display: block; width: 14px; height: 13px; background: #0a78d7; }
.row3, .pair { display: flex; gap: 9px; }
.row3 { margin-top: 5px; }
.row3 .btn, .pair .btn { flex: 1; }
.pair { gap: 5px; }
.splitter { flex: none; width: 5px; margin: -9px 0 -8px; padding-top: 3px; background: #f7f7f7; }
.splitter svg { width: 5px; height: 6px; stroke: none; }
.lays { flex: 1; min-width: 0; padding: 0 13px 0 11px; }
.lays .sec { padding-left: 18px; gap: 5px; }
.cols { display: flex; height: 272px; margin-top: 4px; }
.sb.lsb { padding: 19px 0 5px; }
.lsb i { height: 44px; margin: auto 0 3px; }
.cmds { width: 73px; margin-left: 9px; }
.cmds .btn { width: 100%; }
.btn svg { width: 14px; height: 14px; }
.show { display: flex; align-items: center; gap: 3px; }
.show > svg { width: 12px; height: 12px; stroke: #999; }
.show .btn { gap: 7px; }
.m6 { margin-top: 6px; }
.m7 { margin-top: 7px; }
.m23 { margin-top: 23px; }
.m24 { margin-top: 24px; }
.m80 { margin-top: 80px; }
.foot { display: flex; justify-content: flex-end; gap: 9px; margin-top: 10px; padding-top: 10px; border-top: 1px solid #b0b0b0; }
.foot .btn { width: 73px; }
.btn.ok { border: 2px solid #0a6fc2; }
.grip { position: absolute; right: 2px; bottom: 2px; width: 8px; height: 8px; stroke: #a9b6c2; }
```
